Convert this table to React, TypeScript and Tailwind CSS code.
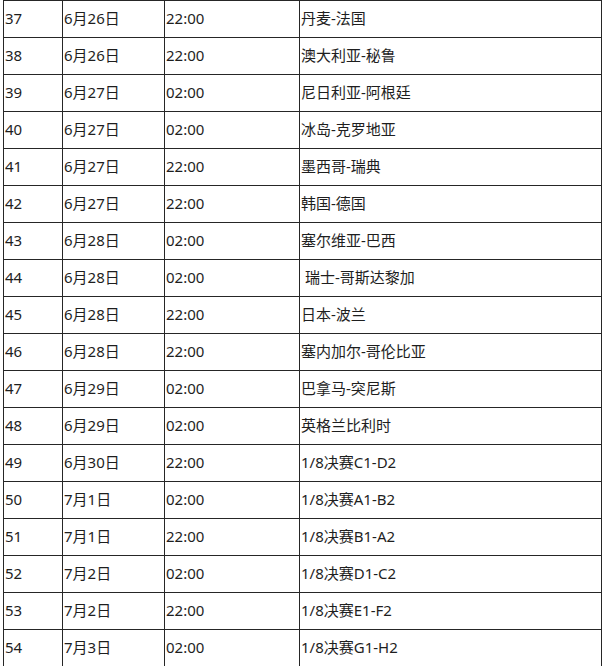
import React from "react";

const rows: [string, string, string, string][] = [
  ["37", "6月26日", "22:00", "丹麦-法国"],
  ["38", "6月26日", "22:00", "澳大利亚-秘鲁"],
  ["39", "6月27日", "02:00", "尼日利亚-阿根廷"],
  ["40", "6月27日", "02:00", "冰岛-克罗地亚"],
  ["41", "6月27日", "22:00", "墨西哥-瑞典"],
  ["42", "6月27日", "22:00", "韩国-德国"],
  ["43", "6月28日", "02:00", "塞尔维亚-巴西"],
  ["44", "6月28日", "02:00", " 瑞士-哥斯达黎加"],
  ["45", "6月28日", "22:00", "日本-波兰"],
  ["46", "6月28日", "22:00", "塞内加尔-哥伦比亚"],
  ["47", "6月29日", "02:00", "巴拿马-突尼斯"],
  ["48", "6月29日", "02:00", "英格兰比利时"],
  ["49", "6月30日", "22:00", "1/8决赛C1-D2"],
  ["50", "7月1日", "02:00", "1/8决赛A1-B2"],
  ["51", "7月1日", "22:00", "1/8决赛B1-A2"],
  ["52", "7月2日", "02:00", "1/8决赛D1-C2"],
  ["53", "7月2日", "22:00", "1/8决赛E1-F2"],
  ["54", "7月3日", "02:00", "1/8决赛G1-H2"],
];

const cell =
  "h-[37px] border-r border-b border-[#262626] flex items-center pl-[1px] pb-[1px] whitespace-pre overflow-hidden leading-none";

export default function App() {
  return (
    <div
      className="w-[602px] h-[666px] overflow-hidden bg-white text-[15px] text-[#1e1e1e]"
      style={{ fontFamily: '"Noto Sans", "Noto Sans CJK SC", sans-serif' }}
    >
      <div className="ml-[3px] border-l border-t border-[#262626] grid grid-cols-[59px_102px_135px_302px]">
        {rows.map((r) => (
          <React.Fragment key={r[0]}>
            <div className={cell}>{r[0]}</div>
            <div className={cell}>{r[1]}</div>
            <div className={cell}>{r[2]}</div>
            <div className={cell}>{r[3]}</div>
          </React.Fragment>
        ))}
      </div>
    </div>
  );
}
